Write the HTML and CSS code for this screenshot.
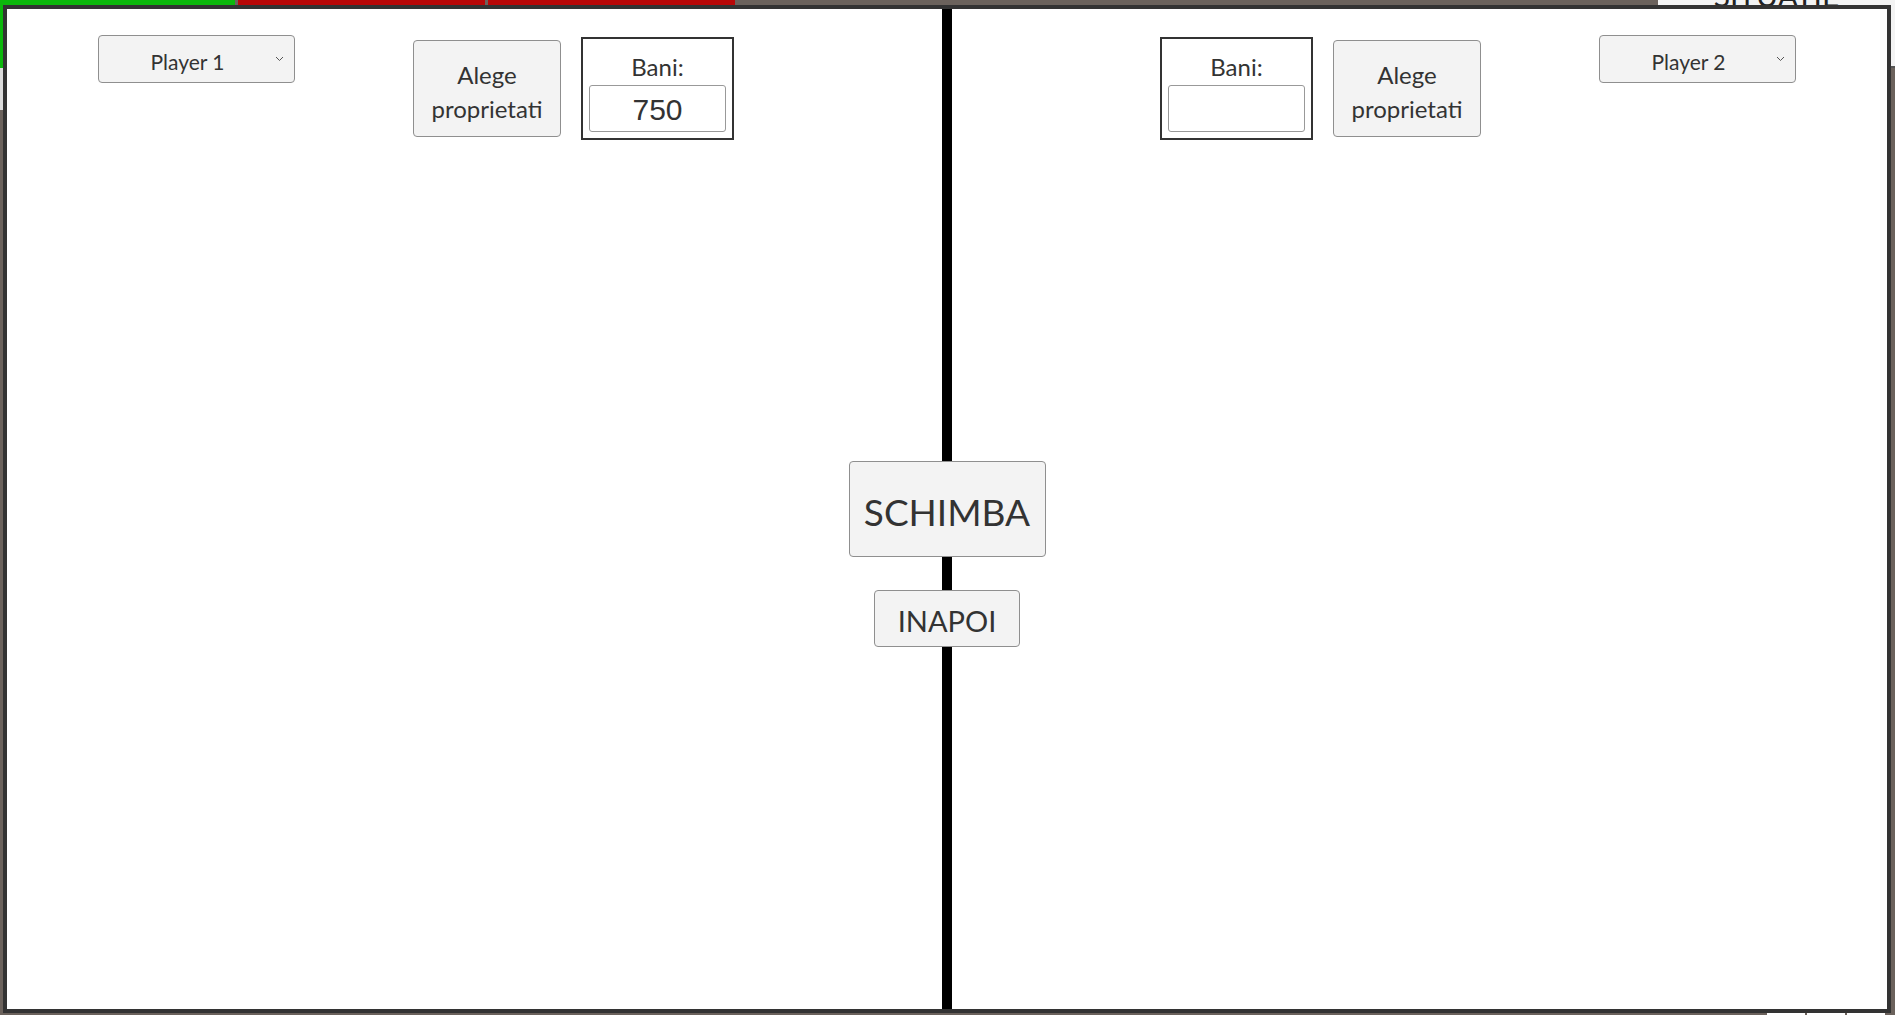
FILE: index.html
```html
<!DOCTYPE html>
<html>
<head>
  <title>Schimb</title>
  <meta charset="utf-8" />
  <link rel="stylesheet" href="styles.css">
</head>
<body>
<div id="board">
  <div class="top-row">
    <div class="tile green"></div>
    <div class="tile red"></div>
    <div class="tile red"></div>
    <div class="spacer"></div>
    <div class="situatie"><span>SITUATIE</span></div>
  </div>
  <div class="side-tile"></div>
  <div class="bottom-row">
    <div class="btile"></div>
    <div class="btile"></div>
    <div class="btile"></div>
  </div>
</div>

<div id="trade">
  <div class="panel left">
    <div class="select-wrap">
      <select class="player-select"><option>Player 1</option><option>Player 2</option></select>
      <svg class="chev" width="9" height="6" viewBox="0 0 9 6"><path d="M1 1 L4.5 4.5 L8 1" fill="none" stroke="#555" stroke-width="1"/></svg>
    </div>
    <button class="btn alege">Alege<br/>proprietati</button>
    <div class="bani">
      <label>Bani:</label>
      <input type="text" value="750" />
    </div>
  </div>

  <div class="divider"></div>

  <div class="panel right">
    <div class="select-wrap">
      <select class="player-select"><option>Player 2</option><option>Player 1</option></select>
      <svg class="chev" width="9" height="6" viewBox="0 0 9 6"><path d="M1 1 L4.5 4.5 L8 1" fill="none" stroke="#555" stroke-width="1"/></svg>
    </div>
    <button class="btn alege">Alege<br/>proprietati</button>
    <div class="bani">
      <label>Bani:</label>
      <input type="text" value="" />
    </div>
  </div>

  <div class="actions">
    <button class="btn schimba">SCHIMBA</button>
    <button class="btn inapoi">INAPOI</button>
  </div>
</div>
</body>
</html>
```

FILE: styles.css
```css
body {
  margin: 0;
  background: #6b625c;
  font-family: "Lato", sans-serif;
  color: #333;
  overflow: hidden;
}
#board {
  height: 100vh;
  display: flex;
  flex-direction: column;
}
.top-row {
  display: flex;
  gap: 3px;
  height: 68px;
}
.tile.green {
  width: 235px;
  background: #0cb80c;
}
.tile.red {
  width: 247px;
  background: #b80808;
}
.spacer {
  flex: 1;
}
.situatie {
  width: 237px;
  background: #f3f3f3;
  border-bottom: 2px solid #555;
  overflow: hidden;
  text-align: center;
}
.situatie span {
  display: block;
  margin-top: -23px;
  font-size: 30px;
  color: #222;
}
.side-tile {
  width: 60px;
  height: 42px;
  background: #dcdcdc;
}
.bottom-row {
  margin-top: auto;
  display: flex;
  justify-content: flex-end;
  gap: 2px;
  height: 3px;
  padding-right: 10px;
}
.btile {
  width: 38px;
  background: #fff;
}

/* trade window */
#trade {
  position: fixed;
  left: 3px;
  top: 5px;
  width: 1880px;
  height: 1000px;
  border: 4px solid rgba(0, 0, 0, 0.8);
  background: #fff;
  display: grid;
  grid-template-columns: 1fr 10px 1fr;
  grid-template-rows: 100%;
}
.divider {
  background: #000;
  grid-column: 2;
  grid-row: 1;
}
.panel {
  grid-row: 1;
  display: flex;
  align-items: flex-start;
  padding-top: 26px;
}
.panel.left {
  grid-column: 1;
  padding-left: 91px;
}
.panel.right {
  grid-column: 3;
  flex-direction: row-reverse;
  padding-right: 91px;
}
.select-wrap {
  position: relative;
}
.player-select {
  appearance: none;
  -webkit-appearance: none;
  width: 197px;
  height: 48px;
  background: #f3f3f3;
  border: 1px solid #8f8f8f;
  border-radius: 4px;
  font-family: "Lato", sans-serif;
  font-size: 21px;
  color: #333;
  text-align: center;
  text-align-last: center;
  padding: 4px 18px 0 0;
}
.chev {
  position: absolute;
  right: 11px;
  top: 21px;
}
.btn {
  background: #f3f3f3;
  border: 1px solid #8f8f8f;
  border-radius: 4px;
  font-family: "Lato", sans-serif;
  color: #333;
  padding: 0;
}
.alege {
  width: 148px;
  height: 97px;
  margin-top: 5px;
  font-size: 24px;
  line-height: 34px;
  padding-top: 6px;
}
.left .alege {
  margin-left: 118px;
}
.right .alege {
  margin-right: 118px;
}
.bani {
  width: 153px;
  height: 103px;
  box-sizing: border-box;
  margin-top: 2px;
  border: 2px solid #333;
  padding: 0 6px;
  display: flex;
  flex-direction: column;
  align-items: center;
}
.left .bani {
  margin-left: 20px;
}
.right .bani {
  margin-right: 20px;
}
.bani label {
  font-size: 24px;
  line-height: 24px;
  padding: 16px 0 6px 0;
}
.bani input {
  width: 137px;
  height: 47px;
  box-sizing: border-box;
  border: 1px solid #999;
  border-radius: 3px;
  font-family: "Liberation Sans", sans-serif;
  font-size: 30px;
  color: #333;
  text-align: center;
  padding: 3px 0 0 0;
}
.actions {
  grid-column: 1 / -1;
  grid-row: 1;
  display: grid;
  grid-template-rows: 1fr auto 1fr;
  justify-items: center;
}
.schimba {
  grid-row: 2;
  width: 197px;
  height: 96px;
  font-size: 37px;
  padding-top: 5px;
}
.inapoi {
  grid-row: 3;
  align-self: start;
  margin-top: 33px;
  width: 146px;
  height: 57px;
  font-size: 29px;
  padding-top: 4px;
}
```
